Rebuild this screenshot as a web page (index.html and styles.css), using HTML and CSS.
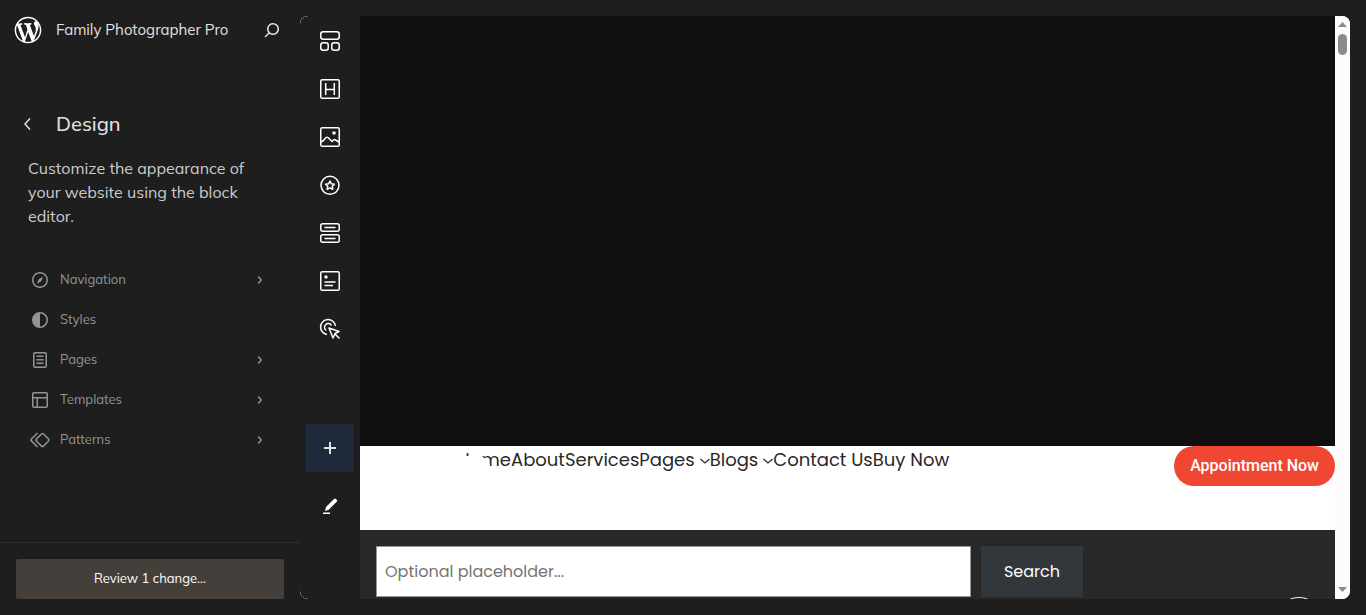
FILE: index.html
```html
<!DOCTYPE html>
<html lang="en">
<head>
<meta charset="utf-8">
<title>Family Photographer Pro</title>
<link rel="stylesheet" href="styles.css">
</head>
<body>
<aside class="sidebar">
  <header class="hub">
    <a class="logo" href="#" aria-label="Dashboard">
      <svg viewBox="-2 -2 24 24" width="32" height="32" fill="currentColor"><path d="M20 10c0-5.51-4.49-10-10-10C4.48 0 0 4.49 0 10c0 5.52 4.48 10 10 10 5.51 0 10-4.48 10-10zM7.78 15.37L4.37 6.22c.55-.02 1.17-.08 1.17-.08.5-.06.44-1.13-.06-1.11 0 0-1.45.11-2.37.11-.18 0-.37 0-.58-.01C4.12 2.69 6.87 1.11 10 1.11c2.33 0 4.45.87 6.05 2.34-.68-.11-1.65.39-1.65 1.58 0 .74.45 1.36.9 2.1.35.61.55 1.36.55 2.46 0 1.49-1.4 5-1.4 5l-3.03-8.37c.54-.02.82-.17.82-.17.5-.05.44-1.25-.06-1.22 0 0-1.44.12-2.38.12-.87 0-2.33-.12-2.33-.12-.5-.03-.56 1.2-.06 1.22l.92.08 1.26 3.41zM17.41 10c.24-.64.74-1.87.43-4.25.7 1.29 1.05 2.71 1.05 4.25 0 3.29-1.73 6.24-4.4 7.78.97-2.59 1.94-5.2 2.92-7.78zM6.1 18.09C3.12 16.65 1.11 13.53 1.11 10c0-1.3.23-2.48.72-3.59C3.25 10.3 4.67 14.2 6.1 18.09zm4.03-6.63l2.58 6.98c-.86.29-1.76.45-2.71.45-.79 0-1.57-.11-2.29-.33.81-2.38 1.62-4.74 2.42-7.1z"/></svg>
    </a>
    <a class="site-name" href="#">Family Photographer Pro</a>
    <button class="icon-button search-button" type="button" aria-label="Open command palette">
      <svg viewBox="0 0 24 24" width="24" height="24" fill="currentColor"><path d="M13 5c-3.3 0-6 2.7-6 6 0 1.4.5 2.7 1.3 3.7l-3.8 3.8 1.1 1.1 3.8-3.8c1 .8 2.3 1.3 3.7 1.3 3.3 0 6-2.7 6-6S16.3 5 13 5zm0 10.500c-2.500 0-4.500-2-4.500-4.500s2-4.500 4.500-4.500 4.500 2 4.500 4.500-2 4.500-4.500 4.500z"/></svg>
    </button>
  </header>
  <main class="panel">
    <div class="title-row">
      <button class="icon-button" type="button" aria-label="Back">
        <svg viewBox="0 0 24 24" width="24" height="24" fill="currentColor"><path d="M14.600 7l-1.200-1L8 12l5.400 6 1.200-1-4.600-5z"/></svg>
      </button>
      <h1>Design</h1>
    </div>
    <p class="description">Customize the appearance of your website using the block editor.</p>
    <nav class="menu">
      <button type="button"><svg viewBox="0 0 24 24" width="24" height="24" fill="currentColor"><path d="M12 4c-4.400 0-8 3.600-8 8s3.600 8 8 8 8-3.600 8-8-3.600-8-8-8zm0 14.500c-3.600 0-6.500-2.900-6.500-6.500S8.400 5.500 12 5.500s6.500 2.900 6.500 6.500-2.900 6.500-6.500 6.500zM9 16l4.500-3L15 8.400l-4.500 3L9 16z"/></svg><span>Navigation</span><svg class="chevron" viewBox="0 0 24 24" width="24" height="24" fill="currentColor"><path d="M10.800 8l-1.100 1 2.600 3-2.600 3 1.100 1 3.400-4z"/></svg></button>
      <button type="button"><svg viewBox="0 0 24 24" width="24" height="24" fill="currentColor"><path fill-rule="evenodd" d="M20 12a8 8 0 1 1-16 0 8 8 0 0 1 16 0zm-1.500 0a6.500 6.500 0 0 1-6.500 6.500v-13a6.500 6.500 0 0 1 6.500 6.500z"/></svg><span>Styles</span></button>
      <button type="button"><svg viewBox="0 0 24 24" width="24" height="24" fill="currentColor"><path d="M15.500 7.500h-7V9h7V7.500Zm-7 3.500h7v1.500h-7V11Zm7 3.500h-7V16h7v-1.500Z"/><path d="M17 4H7a2 2 0 0 0-2 2v12a2 2 0 0 0 2 2h10a2 2 0 0 0 2-2V6a2 2 0 0 0-2-2ZM7 5.500h10a.5.5 0 0 1 .5.5v12a.5.5 0 0 1-.5.5H7a.5.5 0 0 1-.5-.5V6a.5.5 0 0 1 .5-.5Z"/></svg><span>Pages</span><svg class="chevron" viewBox="0 0 24 24" width="24" height="24" fill="currentColor"><path d="M10.800 8l-1.100 1 2.600 3-2.600 3 1.100 1 3.400-4z"/></svg></button>
      <button type="button"><svg viewBox="0 0 24 24" width="24" height="24" fill="currentColor"><path d="M18 5.500H6a.5.5 0 0 0-.5.5v3h13V6a.5.5 0 0 0-.5-.5zm.5 5H10v8h8a.5.5 0 0 0 .5-.5v-7.500zm-10 0h-3V18a.5.5 0 0 0 .5.5h2.500v-8zM6 4h12a2 2 0 0 1 2 2v12a2 2 0 0 1-2 2H6a2 2 0 0 1-2-2V6a2 2 0 0 1 2-2z"/></svg><span>Templates</span><svg class="chevron" viewBox="0 0 24 24" width="24" height="24" fill="currentColor"><path d="M10.800 8l-1.100 1 2.600 3-2.600 3 1.100 1 3.400-4z"/></svg></button>
      <button type="button"><svg viewBox="0 0 24 24" width="24" height="24" fill="currentColor"><path d="M21.300 10.800l-5.600-5.600c-.7-.7-1.800-.7-2.500 0l-5.600 5.600c-.7.7-.7 1.800 0 2.500l5.600 5.600c.3.3.8.5 1.200.5s.9-.2 1.200-.5l5.600-5.600c.8-.7.8-1.900.1-2.500zm-1 1.400l-5.600 5.600c-.1.1-.3.1-.4 0l-5.600-5.600c-.1-.1-.1-.3 0-.4l5.600-5.600s.1-.1.200-.1.100 0 .2.100l5.600 5.600c.1.100.1.300 0 .4zm-16.600-.4L10 5.500l-1-1-6.300 6.300c-.7.7-.7 1.800 0 2.500L9 19.500l1.100-1.100-6.300-6.300c-.2 0-.2-.2-.1-.3z"/></svg><span>Patterns</span><svg class="chevron" viewBox="0 0 24 24" width="24" height="24" fill="currentColor"><path d="M10.800 8l-1.100 1 2.600 3-2.600 3 1.100 1 3.400-4z"/></svg></button>
    </nav>
  </main>
  <footer class="save-hub"><button type="button">Review 1 change...</button></footer>
</aside>

<section class="frame">
  <div class="toolbar">
    <button type="button" aria-label="Layouts"><svg viewBox="0 0 24 24" width="24" height="24"><rect x="2.750" y="2.750" width="18.500" height="7.500" rx="2.500"/><rect x="2.750" y="13.750" width="7.500" height="7.500" rx="2.500"/><rect x="13.750" y="13.750" width="7.500" height="7.500" rx="2.500"/></svg></button>
    <button type="button" aria-label="Heading"><svg viewBox="0 0 24 24" width="24" height="24"><rect x="2.750" y="2.750" width="18.500" height="18.500" rx="1.500"/><path d="M7.700 6v12M16.300 6v12M7.700 12.500h8.600"/></svg></button>
    <button type="button" aria-label="Image"><svg viewBox="0 0 24 24" width="24" height="24"><rect x="2.750" y="2.750" width="18.500" height="18.500" rx="1.500"/><circle class="solid" cx="16" cy="8" r="1.800"/><path d="M3 17l2.500-1.500 2.500-3q1-.7 2 0l4 4 1.500-1.500q1-1 2 0L21 17"/></svg></button>
    <button type="button" aria-label="Icon"><svg viewBox="0 0 24 24" width="24" height="24"><circle cx="12" cy="12.300" r="9"/><path d="M12 8.100l1.400 2.700 3 .4-2.100 2.100.5 3-2.800-1.400-2.800 1.400.5-3-2.100-2.100 3-.4z"/></svg></button>
    <button type="button" aria-label="Buttons"><svg viewBox="0 0 24 24" width="24" height="24"><rect x="2.750" y="2.750" width="18.500" height="7.500" rx="2"/><rect x="2.750" y="13.750" width="18.500" height="7.500" rx="2"/><path d="M6.500 6.500h11M6.500 17.500h11"/></svg></button>
    <button type="button" aria-label="Form"><svg viewBox="0 0 24 24" width="24" height="24"><rect x="2.750" y="2.750" width="18.500" height="18.500" rx="1.500"/><circle class="solid" cx="8" cy="8" r="1.700"/><path d="M6.500 13h11M6.500 16.500H15"/></svg></button>
    <button type="button" aria-label="Interaction"><svg viewBox="0 0 24 24" width="24" height="24"><path d="M9 17.500A7.500 7.500 0 1 1 17.500 9M8.200 13.300A3.700 3.700 0 1 1 13.500 8.500M11 11l10 3.500-4 2-2 4.500zM17 17l4.500 4.500"/></svg></button>
    <button class="add" type="button" aria-label="Add block"><svg viewBox="0 0 24 24" width="24" height="24"><path class="plus" d="M12 6v12M6 12h12"/></svg></button>
    <button class="edit" type="button" aria-label="Edit"><svg viewBox="0 0 24 24" width="24" height="24"><path class="solid" d="M7 17l1-4 8-8q1-1 2 0l.7.700q1 1 0 2l-8 8zM5 18.500h7V20H5z"/></svg></button>
  </div>
  <div class="preview">
    <div class="hero"></div>
    <div class="site-header">
      <nav class="site-nav">
        <a class="home" href="#">Home</a>
        <a href="#">About</a>
        <a href="#">Services</a>
        <a href="#">Pages<svg viewBox="0 0 12 12" width="12" height="12"><path d="M2.500 4L7 8l4.500-4"/></svg></a>
        <a href="#">Blogs<svg viewBox="0 0 12 12" width="12" height="12"><path d="M2.500 4L7 8l4.500-4"/></svg></a>
        <a href="#">Contact Us</a>
        <a href="#">Buy Now</a>
      </nav>
      <a class="appointment" href="#">Appointment Now</a>
    </div>
    <div class="site-search">
      <input type="search" aria-label="Search" placeholder="Optional placeholder...">
      <button type="button">Search</button>
      <span class="scroll-top"></span>
    </div>
  </div>
  <div class="scrollbar">
    <svg viewBox="0 0 9 5" width="9" height="5"><path d="M4.500 0L9 5H0z"/></svg>
    <span class="thumb"></span>
    <svg viewBox="0 0 9 5" width="9" height="5"><path d="M0 0h9L4.500 5z"/></svg>
  </div>
</section>
</body>
</html>
```

FILE: styles.css
```css
* { box-sizing: border-box; }
body {
  margin: 0;
  height: 100vh;
  display: flex;
  overflow: hidden;
  background: #1e1e1e;
  color: #e0e0e0;
  font-family: Mulish, Muli, Nunito, "Open Sans", sans-serif;
}
button, input { font: inherit; color: inherit; }
button { border: 0; padding: 0; background: none; cursor: pointer; }
a { color: inherit; text-decoration: none; }
svg { display: block; flex: none; }

.sidebar { flex: 0 0 300px; display: flex; flex-direction: column; }
.hub { height: 60px; display: flex; align-items: center; padding: 0 16px 0 12px; }
.logo { width: 44px; color: #fff; }
.site-name { flex: 1; font-size: 15px; line-height: 20px; }
.icon-button { width: 24px; height: 24px; }

.panel { flex: 1; padding: 48px 16px 0; }
.title-row { display: flex; align-items: center; gap: 16px; min-height: 32px; }
.title-row h1 { margin: 0; font-size: 20px; line-height: 32px; font-weight: 500; }
.description { margin: 16px 24px 0 12px; font-size: 16px; line-height: 24px; color: #ccc; }
.menu { margin-top: 32px; padding: 0 12px; }
.menu button {
  width: 100%; height: 40px; display: flex; align-items: center; gap: 8px;
  color: #949494; font-size: 13px; text-align: left;
}
.menu span { flex: 1; padding-bottom: 2px; }

.save-hub { border-top: 1px solid #2f2f2f; padding: 16px; }
.save-hub button {
  width: 100%; height: 40px; padding-bottom: 2px; border-radius: 2px;
  background: #453f3b; color: #fff; font-size: 13px;
}

.frame {
  flex: 1; min-width: 0; margin: 16px 16px 16px 0;
  display: flex; overflow: hidden; border-radius: 8px; background: #fff;
}
.toolbar {
  flex: 0 0 60px; display: flex; flex-direction: column; align-items: center;
  padding: 1px 0 4px; background: #1e1e1e; border-radius: 8px 0 0 8px;
}
.toolbar button { width: 48px; height: 48px; display: grid; place-items: center; }
.toolbar svg { fill: none; stroke: #fff; stroke-width: 1.5; stroke-linejoin: round; }
.toolbar .solid { fill: #fff; stroke: none; }
.toolbar .plus { stroke: #e0e0e0; stroke-width: 2; }
.toolbar .add { margin-top: 71px; background: #1e2939; }
.toolbar .edit { margin-top: 10px; }

.preview { flex: 1; min-width: 0; display: flex; flex-direction: column; }
.hero { flex: 1; background: #0f0f0f; }
.site-header {
  height: 84px; display: flex; justify-content: space-between; align-items: flex-start;
  padding-left: 96px; background: #fff;
}
.site-nav {
  display: flex; color: #282828;
  font-family: Poppins, Inter, sans-serif; font-size: 18px; line-height: 28px; white-space: nowrap;
}
.site-nav a { display: flex; align-items: center; gap: 3px; }
.site-nav svg { fill: none; stroke: #282828; stroke-width: 1.2; margin-top: 2px; }
.site-nav .home { position: relative; min-width: 55px; justify-content: flex-end; }
/* White badge that covers the start of the first menu item. */
.home::after {
  content: ""; position: absolute; left: 0; top: 10px; width: 34px; height: 18px;
  background: #fff; border-radius: 0 12px 0 0;
}
.home::before {
  content: ""; position: absolute; left: 0; top: 0; width: 9px; height: 28px; background: #fff;
}
.appointment {
  height: 40px; padding: 0 16px; border-radius: 20px; background: #f04733; color: #fff;
  font: 500 16px/40px Roboto, sans-serif;
}
.site-search {
  position: relative; height: 69px; display: flex; gap: 10px; padding: 16px 16px 0;
  background: #282828; font-family: Poppins, Inter, sans-serif; font-size: 16px; overflow: hidden;
}
.site-search input {
  width: 595px; height: 51px; padding: 0 8px; border: 1px solid #949494;
  border-radius: 0; background: #fff; color: #222;
}
.site-search input::placeholder { color: #757575; opacity: 1; }
.site-search button { width: 102px; height: 51px; background: #32373c; color: #fff; }
.scroll-top {
  position: absolute; right: 12px; top: 67px; width: 48px; height: 48px;
  border: 1px solid #fff; border-radius: 50%; background: #111;
}

.scrollbar {
  flex: 0 0 15px; display: flex; flex-direction: column; align-items: center;
  padding: 6px 0 7px; background: #fcfcfc;
}
.scrollbar svg { fill: #8b8b8b; }
.thumb { width: 9px; height: 21px; margin: 7px 0 auto; border-radius: 5px; background: #8b8b8b; }
```
